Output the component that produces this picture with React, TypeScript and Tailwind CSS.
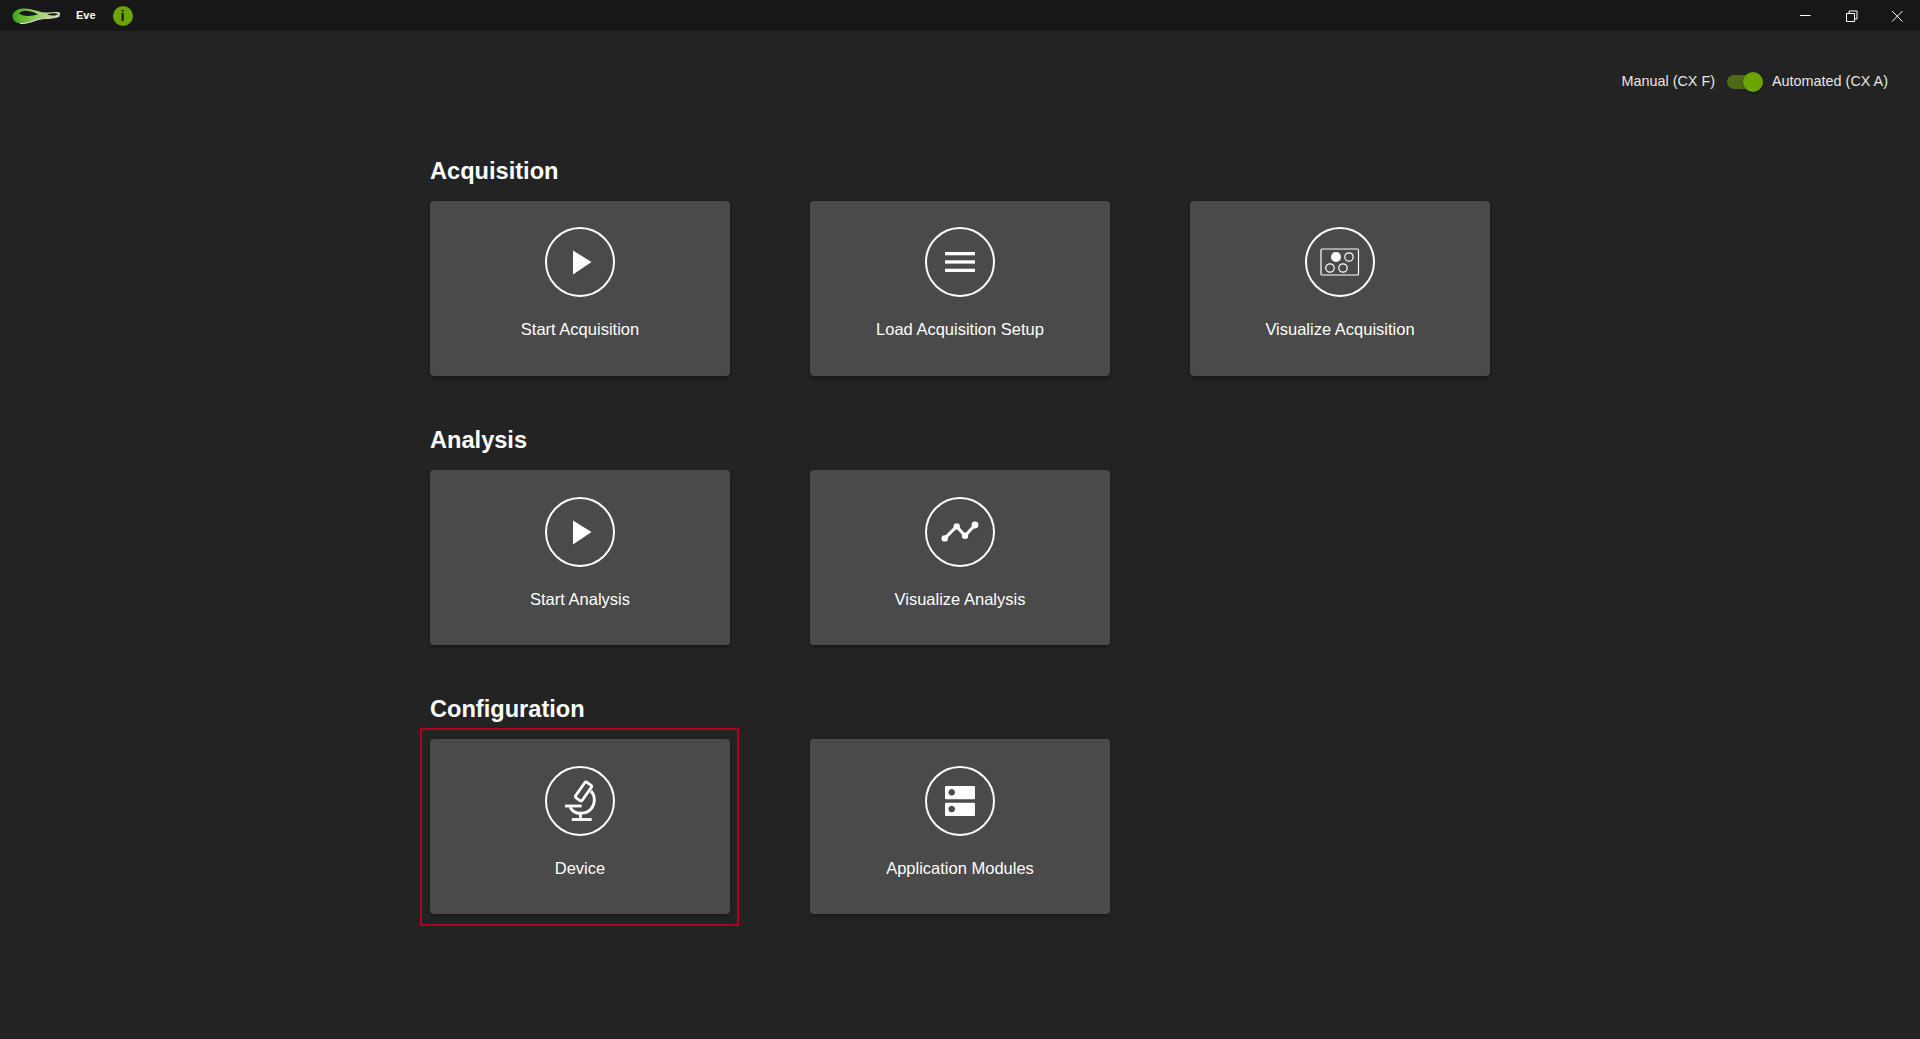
import React from "react";

const Ring = ({ children }: { children: React.ReactNode }) => (
  <svg width="70" height="70" viewBox="0 0 70 70" className="block">
    <circle cx="35" cy="35" r="34" fill="none" stroke="#fff" strokeWidth="2" />
    {children}
  </svg>
);

const PlayIcon = () => (
  <Ring>
    <path d="M28 23.5 L46.5 35 L28 47.5 Z" fill="#fff" />
  </Ring>
);
const MenuIcon = () => (
  <Ring>
    <rect x="20" y="25" width="30" height="3.3" fill="#fff" />
    <rect x="20" y="33.3" width="30" height="3.3" fill="#fff" />
    <rect x="20" y="41.7" width="30" height="3.3" fill="#fff" />
  </Ring>
);
const PlateIcon = () => (
  <Ring>
    <rect x="16" y="22" width="37.5" height="26" rx="1" fill="none" stroke="#fff" strokeWidth="1.2" />
    <circle cx="31" cy="30" r="5" fill="#fff" />
    <circle cx="44" cy="30" r="4.2" fill="none" stroke="#fff" strokeWidth="1.2" />
    <circle cx="25" cy="41" r="4.2" fill="none" stroke="#fff" strokeWidth="1.2" />
    <circle cx="38" cy="41" r="4.2" fill="none" stroke="#fff" strokeWidth="1.2" />
  </Ring>
);
const ChartIcon = () => (
  <Ring>
    <path d="M19.7 41.4 L31.7 29.4 L40 38.7 L50 28" fill="none" stroke="#fff" strokeWidth="3" />
    <circle cx="19.7" cy="41.4" r="3.2" fill="#fff" />
    <circle cx="31.7" cy="29.4" r="3.2" fill="#fff" />
    <circle cx="40" cy="38.7" r="3.2" fill="#fff" />
    <circle cx="50" cy="28" r="3.4" fill="#fff" />
  </Ring>
);
const MicroscopeIcon = () => (
  <Ring>
    <g fill="none" stroke="#fff" strokeWidth="2.8">
      <rect x="-4" y="-9.5" width="8" height="19" rx="1.6" transform="translate(38.5,25.5) rotate(35)" />
      <path d="M46 25 C50.5 30 50.5 38 46 43 C43 46.5 38 47.5 34 47" />
      <path d="M20 40 H36.7" />
      <path d="M25 41 C27 45 31 47.5 35.5 47.5 V53.5" />
      <path d="M26.7 53.5 H46.7" />
    </g>
  </Ring>
);
const ServerIcon = () => (
  <Ring>
    <path
      fillRule="evenodd"
      fill="#fff"
      d="M21 20 H49 a1 1 0 0 1 1 1 V32.3 a1 1 0 0 1 -1 1 H21 a1 1 0 0 1 -1 -1 V21 a1 1 0 0 1 1 -1 Z M26.7 23 a3.3 3.3 0 1 0 0.01 0 Z"
    />
    <path
      fillRule="evenodd"
      fill="#fff"
      d="M21 36.7 H49 a1 1 0 0 1 1 1 V49 a1 1 0 0 1 -1 1 H21 a1 1 0 0 1 -1 -1 V37.7 a1 1 0 0 1 1 -1 Z M26.7 39.7 a3.3 3.3 0 1 0 0.01 0 Z"
    />
  </Ring>
);

const Card = ({ icon, label, lower }: { icon: React.ReactNode; label: string; lower?: boolean }) => (
  <div
    className={
      lower
        ? "flex h-[175px] w-[300px] flex-col items-center rounded-[4px] bg-[#4a4a4a] pt-[27px] shadow-[0_2px_4px_rgba(0,0,0,0.35)]"
        : "flex h-[175px] w-[300px] flex-col items-center rounded-[4px] bg-[#4a4a4a] pt-[26px] shadow-[0_2px_4px_rgba(0,0,0,0.35)]"
    }
  >
    {icon}
    <div className="mt-[20px] text-[16.5px] leading-[24px] text-white">{label}</div>
  </div>
);

const Section = ({ title, children }: { title: string; children: React.ReactNode }) => (
  <section className="h-[269px] pt-[1px]">
    <h2 className="mb-[14px] h-[32px] text-[23.6px] font-bold leading-[32px] text-white">{title}</h2>
    <div className="flex gap-[80px]">{children}</div>
  </section>
);

const Logo = () => (
  <svg width="50" height="18" viewBox="0 0 50 18" className="mt-[2px] block">
    <defs>
      <linearGradient id="lg" x1="0" x2="1" y1="0" y2="0">
        <stop offset="0" stopColor="#3fa51a" />
        <stop offset="0.35" stopColor="#7cc043" />
        <stop offset="0.7" stopColor="#b8d88a" />
        <stop offset="1" stopColor="#c9d8b8" />
      </linearGradient>
    </defs>
    <path
      fillRule="evenodd"
      fill="url(#lg)"
      d="M0.5 8 C1 3 6 0.5 12 0.5 C20 0.5 27 4 33 4.5 C38 4.8 42 3.5 46 4 C49 4.5 49 8 45.5 9 C40 10.5 34 9.5 28 11 C22 13 17 16 11 15.5 C5 15.5 0.5 13 0.5 8 Z M7 5.5 C10 1.5 18 2 26 6.5 C20 8 11 9 7 5.5 Z M35 6.5 C39 5 44 5 46 6 C44 8 39 8 35 6.5 Z"
    />
    <path d="M8 15.5 C16 16 22 12 29 11 C35 10 42 11 47.5 8" fill="none" stroke="#e4e4e4" strokeWidth="1" />
  </svg>
);

export default function App() {
  return (
    <div className="flex h-[1039px] w-[1920px] flex-col overflow-hidden bg-[#232323] font-['Liberation_Sans',Arial,sans-serif]">
      <header className="flex h-[31px] shrink-0 items-center bg-[#171717]">
        <div className="ml-[12px]">
          <Logo />
        </div>
        <span className="ml-[14px] text-[11px] font-bold text-white">Eve</span>
        <span className="ml-[17px] flex h-[20px] w-[20px] items-center justify-center rounded-full bg-[#6ba300] text-[15px] font-bold leading-none text-[#171717]">
          i
        </span>
        <div className="ml-auto flex items-center">
          <svg width="46" height="31" viewBox="0 0 46 31" className="block">
            <path d="M18 15.5 H28.5" stroke="#fff" strokeWidth="1" />
          </svg>
          <svg width="46" height="31" viewBox="0 0 46 31" className="block">
            <path
              d="M18.5 13.5 H26.5 V21.5 H18.5 Z M21 13.5 V11 H29 V19 H26.5"
              fill="none"
              stroke="#fff"
              strokeWidth="1"
            />
          </svg>
          <svg width="46" height="31" viewBox="0 0 46 31" className="block">
            <path d="M18 11 L28.5 21.5 M28.5 11 L18 21.5" stroke="#fff" strokeWidth="1" />
          </svg>
        </div>
      </header>

      <div className="flex justify-end pr-[32px] pt-[41px]">
        <div className="flex h-[20px] items-center text-[14.4px] text-[#e6e6e6]">
          <span>Manual (CX F)</span>
          <span className="relative ml-[12px] mr-[9px] block h-[14px] w-[36px] rounded-full bg-[#4d6a1c]">
            <span className="absolute right-0 top-[-3px] h-[20px] w-[20px] rounded-full bg-[#6ba300] shadow-[0_1px_2px_rgba(0,0,0,0.4)]" />
          </span>
          <span>Automated (CX A)</span>
        </div>
      </div>

      <main className="pl-[430px] pt-[62px]">
        <Section title="Acquisition">
          <Card icon={<PlayIcon />} label="Start Acquisition" />
          <Card icon={<MenuIcon />} label="Load Acquisition Setup" />
          <Card icon={<PlateIcon />} label="Visualize Acquisition" />
        </Section>
        <Section title="Analysis">
          <Card lower icon={<PlayIcon />} label="Start Analysis" />
          <Card lower icon={<ChartIcon />} label="Visualize Analysis" />
        </Section>
        <Section title="Configuration">
          <div className="relative">
            <Card lower icon={<MicroscopeIcon />} label="Device" />
            <div className="pointer-events-none absolute left-[-10px] top-[-11px] h-[198px] w-[319px] border-2 border-[#b00020]" />
          </div>
          <Card lower icon={<ServerIcon />} label="Application Modules" />
        </Section>
      </main>
    </div>
  );
}
